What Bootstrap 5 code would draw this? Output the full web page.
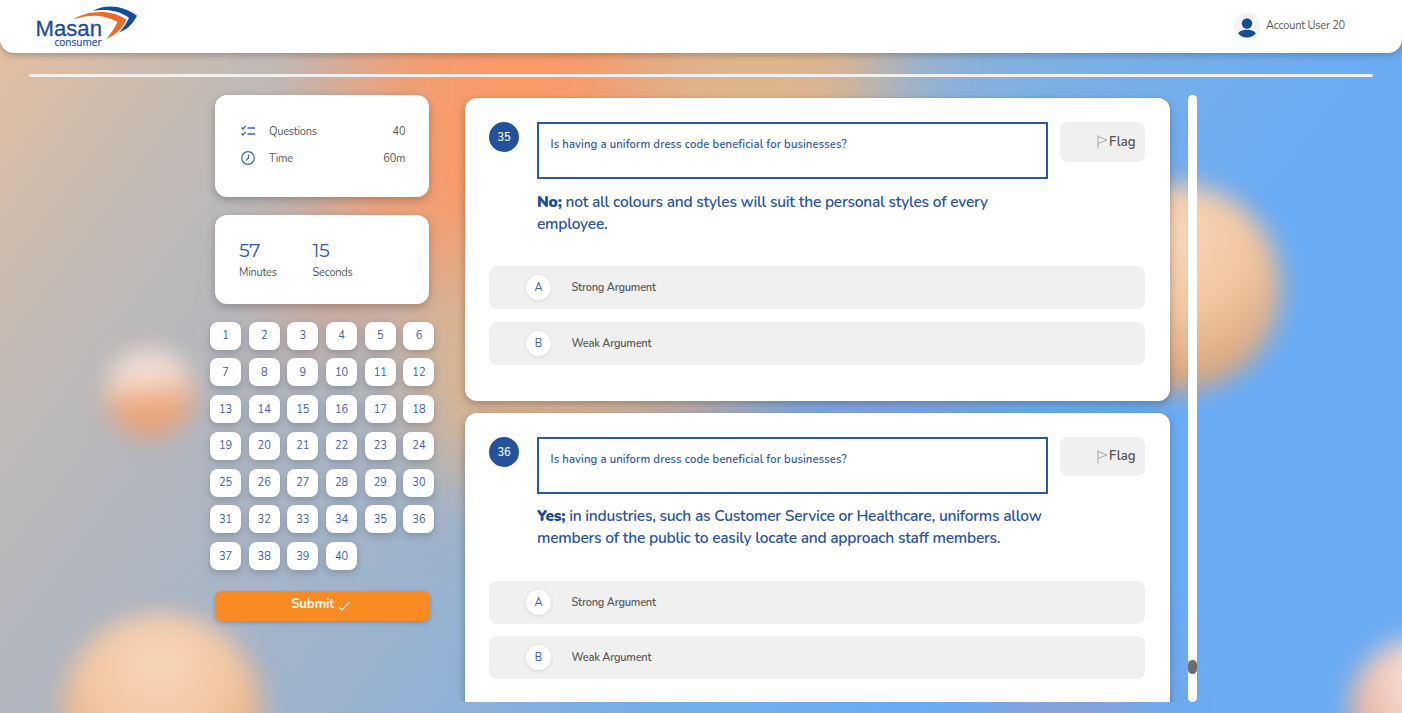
<!DOCTYPE html>
<html lang="en">
<head>
<meta charset="utf-8">
<meta name="viewport" content="width=device-width, initial-scale=1">
<title>Masan Consumer – Assessment</title>
<link href="https://cdn.jsdelivr.net/npm/bootstrap@5.3.0/dist/css/bootstrap.min.css" rel="stylesheet">
<style>
:root{--navy:#24529a;--ink:#5a5a5a;--ui:Nunito,"Open Sans","Noto Sans",sans-serif}
body{font-family:var(--ui);font-size:11px;letter-spacing:-.22px;line-height:15px;color:var(--ink);height:713px;overflow:hidden;position:relative;background:#6aacf4}
.backdrop{position:absolute;inset:0;z-index:-1;width:100%;height:100%}
.topbar{height:53px;background:#fff;border-radius:0 0 14px 14px;box-shadow:0 2px 6px rgba(60,60,60,.35);padding:0 57px 0 35px}
.account-name{margin:0 0 3px 5px}
.progress-line{height:3px;margin:21px 29px 0;background:#f2f0ef;border-radius:2px}
.layout{margin-left:210px;margin-top:18px;height:607px}
.side{width:225px}
.panel{background:#fff;border-radius:12px;margin:0 5.7px 0 5px;box-shadow:0 3px 9px rgba(60,50,50,.32)}
.panel-info{height:102px;padding:26.5px 24px 0 26px}
.info-row{height:19px;margin-bottom:8px;gap:14px}
.panel-time{height:88.5px;margin-top:18px;padding:24px 24px 0}
.digits{font-family:Montserrat,"Open Sans",sans-serif;font-size:19px;line-height:23px;margin-bottom:2.5px;color:#2f5aa8;letter-spacing:-.3px}
.unit{width:73.5px}
.qgrid{display:grid;grid-template-columns:repeat(6,31px);column-gap:7.7px;row-gap:8.75px;margin-top:18px}
.qbtn{height:28px;border:0;background:#fff;border-radius:8px;color:#3e62a8;font-size:11px;letter-spacing:0;padding:0;box-shadow:0 3px 7px rgba(50,60,80,.26)}
.submit{width:214.5px;height:30.5px;margin:20.5px 5px 0;border:0;border-radius:7px;background:#fa8a22;color:#fff;font-weight:700;font-size:13px;letter-spacing:0;box-shadow:0 2px 4px rgba(60,60,60,.3);padding:0 2px 3px 0}
.submit svg{margin:3px 0 0 4px}
.feed{width:752.5px;padding:3px 18px 0 30px;overflow:hidden}
.qcard{background:#fff;border-radius:12px;height:303px;padding:24px 24.5px 0 24px;margin-bottom:11.5px;box-shadow:0 3px 9px rgba(60,50,50,.38)}
.num{width:30px;height:30px;background:var(--navy);color:#fff;font-weight:600;font-size:11px;letter-spacing:0;margin-right:18px;flex:none;padding-top:1px}
.qhead{height:144px}
.qbody{width:511px;flex:none}
.stem{height:57px;border:2px solid #2b579f;padding:13px 11.5px;font-size:11.25px;letter-spacing:.13px;font-weight:600;line-height:16px;color:#2f59a4}
.claim{font-size:15.5px;letter-spacing:-.22px;line-height:22.4px;font-weight:600;color:#2a559f;margin-top:11.5px;white-space:nowrap}
.claim b{font-weight:900;color:#1d4b95}
.flagbtn{width:85px;height:39.5px;background:#f0f0f0;border-radius:8px;margin-left:12px;padding:1px 9.5px 0 0;font-size:13.1px;letter-spacing:0;font-weight:600;color:#555;flex:none}
.opt{height:43px;background:#f0f0f0;border-radius:8px;margin-bottom:12.5px;padding-left:37px;font-weight:600}
.letter{width:25px;height:25px;background:#fff;color:#3a62ad;font-weight:400;font-size:11px;letter-spacing:0;margin-right:20.5px;box-shadow:0 1px 4px rgba(0,0,0,.1)}
.track{width:9.5px;background:#fff;border-radius:5px;padding-top:565px}
.thumb{height:14px;background:#6c6c6c;border-radius:5px}
</style>
</head>
<body>
<svg class="backdrop" viewBox="0 0 1402 713" preserveAspectRatio="none" aria-hidden="true">
  <defs>
    <linearGradient id="base" gradientUnits="userSpaceOnUse" x1="0" y1="0" x2="960" y2="720">
      <stop offset=".03" stop-color="#e2bfa2"/><stop offset=".12" stop-color="#cebcad"/><stop offset=".21" stop-color="#bfbab7"/><stop offset=".35" stop-color="#b2b6bf"/><stop offset=".57" stop-color="#9cb3cd"/><stop offset=".66" stop-color="#8eb2d8"/><stop offset=".74" stop-color="#7cafe3"/><stop offset=".95" stop-color="#6aacf4"/>
    </linearGradient>
    <linearGradient id="ballA" x1="0" y1="0" x2=".1" y2="1"><stop offset="0" stop-color="#f2e0d8"/><stop offset=".35" stop-color="#f4ddd2"/><stop offset=".7" stop-color="#eda67b"/><stop offset="1" stop-color="#e39f75"/></linearGradient>
    <radialGradient id="ballB" cx=".48" cy=".25" r=".8"><stop offset="0" stop-color="#f7d6bb"/><stop offset=".45" stop-color="#f3c7a1"/><stop offset="1" stop-color="#d09c74"/></radialGradient>
    <radialGradient id="ballC" cx=".6" cy=".3" r=".7"><stop offset="0" stop-color="#faece7"/><stop offset=".5" stop-color="#f0cfc3"/><stop offset="1" stop-color="#e9a98b"/></radialGradient>
    <filter id="wide" x="-60%" y="-60%" width="220%" height="220%" color-interpolation-filters="sRGB"><feGaussianBlur stdDeviation="42"/></filter>
    <filter id="soft" x="-40%" y="-40%" width="180%" height="180%" color-interpolation-filters="sRGB"><feGaussianBlur stdDeviation="12"/></filter>
  </defs>
  <rect width="1402" height="713" fill="url(#base)"/>
  <g filter="url(#wide)">
    <path d="M600-80H900L870 160 700 420 480 490 400 410 430 250Z" fill="#deb48d"/>
    <path d="M340-80H690L630 180 450 270 370 300 280 370 320 200Z" fill="#e6a482"/>
    <path d="M430-60H650L600 180 460 270 400 200Z" fill="#f99a69"/>
    <path d="M650 380H740V430H650Z" fill="#cda5a0"/>
    <path d="M800 370H960V440H800Z" fill="#86a2e0"/>
    <path d="M1000 680H1140V740H1000Z" fill="#a296c0"/>
    <path d="M640 690H800V760H640Z" fill="#6fb0ea"/>
  </g>
  <g filter="url(#soft)">
    <circle cx="150" cy="393" r="44" fill="url(#ballA)"/>
    <circle cx="162" cy="714" r="101" fill="url(#ballB)"/>
    <circle cx="1177" cy="288" r="104" fill="url(#ballB)"/>
    <circle cx="1420" cy="708" r="70" fill="url(#ballC)"/>
  </g>
</svg>

<header class="topbar d-flex justify-content-between align-items-center">
  <svg width="104" height="46" viewBox="35 3.500 104 46" role="img" aria-label="Masan consumer">
    <text x="35.5" y="35.8" font-family="Liberation Sans" font-size="22.5" letter-spacing="0" textLength="66.5" lengthAdjust="spacingAndGlyphs" fill="#1c4d9d" stroke="#1c4d9d" stroke-width=".3">Masan</text>
    <text x="54.5" y="45" font-family="Open Sans" font-size="11.5" letter-spacing="0" textLength="47" lengthAdjust="spacingAndGlyphs" fill="#1c4d9d" stroke="#1c4d9d" stroke-width=".2">consumer</text>
    <path d="M93 10.200C105 3.800 122 4 137 15.300 133 22.500 128 29 119.500 31.800 124 27 127 22 129 17.300 118 9.500 107 8.500 93 10.200Z" fill="#114d9e"/>
    <path d="M73 19C88 9.800 110 8.300 126.500 19 122 28 116 34.500 106.500 38.200 111.500 32.500 115 27 117.500 21.600 103 13 88 14 73 19Z" fill="#ec6c26"/>
  </svg>
  <div class="d-flex align-items-center">
    <svg width="28" height="28" viewBox="0 1 28 28"><circle cx="14" cy="14" r="13.500" fill="#f1f5f9"/><circle cx="14" cy="11.500" r="5.200" fill="#164f91"/><path d="M5.300 21.500C7 16.500 21 16.500 22.700 21.500 19 26.800 9 26.800 5.300 21.500Z" fill="#164f91"/></svg>
    <span class="account-name">Account User 20</span>
  </div>
</header>
<div class="progress-line"></div>

<main class="layout d-flex">
  <aside class="side">
    <section class="panel panel-info">
      <div class="info-row d-flex align-items-center">
        <svg width="14" height="14" viewBox="0 0 14 14" fill="none" stroke="#3c67b0" stroke-width="1.300"><path d="M.5 3.500 2 5 4.700 1.800M.5 9.500 2 11 4.700 7.800M6.500 4H14M6.500 10H14"/></svg>
        <span>Questions</span><span class="ms-auto">40</span>
      </div>
      <div class="info-row d-flex align-items-center">
        <svg width="14" height="14" viewBox="0 0 14 14" fill="none" stroke="#3c67b0" stroke-width="1.200"><circle cx="7" cy="7" r="6.300"/><path d="M7.500 3.500V7L5 9.500"/></svg>
        <span>Time</span><span class="ms-auto">60m</span>
      </div>
    </section>
    <section class="panel panel-time d-flex">
      <div class="unit"><div class="digits">57</div>Minutes</div>
      <div class="unit"><div class="digits">15</div>Seconds</div>
    </section>
    <nav class="qgrid" id="qgrid" aria-label="Questions"></nav>
    <button class="submit d-flex align-items-center justify-content-center" type="button">Submit
      <svg width="13" height="13" viewBox="0 0 13 13" fill="none" stroke="#fff" stroke-width="1.200"><path d="M1 8 4 11 12 2.500"/></svg></button>
  </aside>

  <div class="feed">
    <article class="qcard">
      <div class="qhead d-flex align-items-start">
        <span class="num rounded-circle d-flex align-items-center justify-content-center">35</span>
        <div class="qbody">
          <div class="stem">Is having a uniform dress code beneficial for businesses?</div>
          <p class="claim mb-0"><b>No;</b> not all colours and styles will suit the personal styles of every<br>employee.</p>
        </div>
        <button class="flagbtn border-0 d-flex align-items-center justify-content-end" type="button"><svg width="12" height="14" viewBox="0 0 12 14" fill="none" stroke="#aaa"><path d="M1 0V13.500M1 1.500 10 5 1 8.500"/></svg><span>Flag</span></button>
      </div>
      <div class="opt d-flex align-items-center"><span class="letter rounded-circle d-flex align-items-center justify-content-center">A</span><span>Strong Argument</span></div>
      <div class="opt d-flex align-items-center"><span class="letter rounded-circle d-flex align-items-center justify-content-center">B</span><span>Weak Argument</span></div>
    </article>
    <article class="qcard">
      <div class="qhead d-flex align-items-start">
        <span class="num rounded-circle d-flex align-items-center justify-content-center">36</span>
        <div class="qbody">
          <div class="stem">Is having a uniform dress code beneficial for businesses?</div>
          <p class="claim mb-0"><b>Yes;</b> in industries, such as Customer Service or Healthcare, uniforms allow<br>members of the public to easily locate and approach staff members.</p>
        </div>
        <button class="flagbtn border-0 d-flex align-items-center justify-content-end" type="button"><svg width="12" height="14" viewBox="0 0 12 14" fill="none" stroke="#aaa"><path d="M1 0V13.500M1 1.500 10 5 1 8.500"/></svg><span>Flag</span></button>
      </div>
      <div class="opt d-flex align-items-center"><span class="letter rounded-circle d-flex align-items-center justify-content-center">A</span><span>Strong Argument</span></div>
      <div class="opt d-flex align-items-center"><span class="letter rounded-circle d-flex align-items-center justify-content-center">B</span><span>Weak Argument</span></div>
    </article>
  </div>
  <div class="track"><div class="thumb"></div></div>
</main>
<script>
const grid = document.getElementById('qgrid');
for (let n = 1; n <= 40; n++) {
  const b = document.createElement('button');
  b.type = 'button'; b.className = 'qbtn'; b.textContent = n;
  grid.append(b);
}
</script>
<script src="https://cdn.jsdelivr.net/npm/bootstrap@5.3.0/dist/js/bootstrap.bundle.min.js"></script>
</body>
</html>
